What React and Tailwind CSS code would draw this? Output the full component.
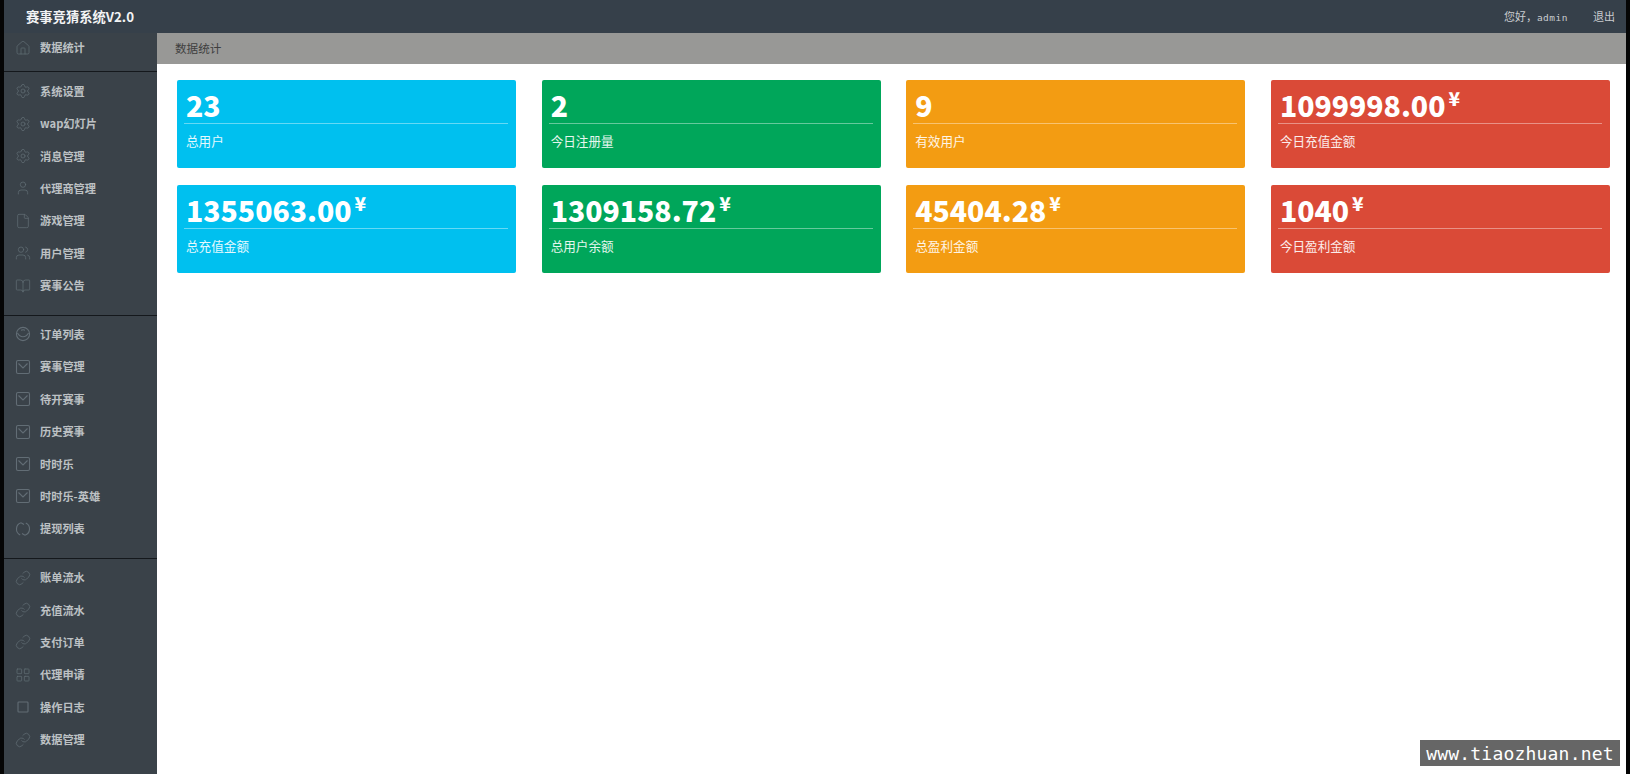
import React from "react";
import { Home, Settings, User, File, Users, BookOpen, Link, LayoutGrid } from "lucide-react";

const cjk = "font-['Noto_Sans_CJK_SC','Noto_Sans',sans-serif]";

function BoxIcon(props) {
  return (
    <svg width="16" height="16" viewBox="0 0 16 16" fill="none" stroke="currentColor" strokeWidth="1.1" className={props.className}>
      <rect x="1.5" y="1.5" width="13" height="13" rx="1.5" />
      <path d="M3.5 4.5L8 9l4.500-4.500" />
    </svg>
  );
}

function DonutIcon(props) {
  return (
    <svg width="16" height="16" viewBox="0 0 16 16" fill="none" stroke="currentColor" strokeWidth="1.1" className={props.className}>
      <circle cx="8" cy="8" r="6.6" />
      <path d="M2.500 7c1.500 3 3.500 3.800 5.500 3.800S12 10 13.500 7" />
      <path d="M6 4.200c1.500-.6 2.800-.6 4 0" />
    </svg>
  );
}

function RingIcon(props) {
  return (
    <svg width="16" height="16" viewBox="0 0 16 16" fill="none" stroke="currentColor" strokeWidth="1.1" className={props.className}>
      <path d="M6 1.800A6.600 6.600 0 0 0 5.200 14" />
      <path d="M10 14.200A6.600 6.600 0 0 0 10.800 2" />
      <path d="M6 1.800l3 1.600M10 14.200l-3-1.600" />
    </svg>
  );
}

function SquareIcon(props) {
  return (
    <svg width="16" height="16" viewBox="0 0 16 16" fill="none" stroke="currentColor" strokeWidth="1.1" className={props.className}>
      <rect x="3" y="3" width="10" height="10" rx="0.8" />
    </svg>
  );
}

const sections = [
  [["数据统计", Home]],
  [["系统设置", Settings], ["wap幻灯片", Settings], ["消息管理", Settings], ["代理商管理", User], ["游戏管理", File], ["用户管理", Users], ["赛事公告", BookOpen]],
  [["订单列表", DonutIcon], ["赛事管理", BoxIcon], ["待开赛事", BoxIcon], ["历史赛事", BoxIcon], ["时时乐", BoxIcon], ["时时乐-英雄", BoxIcon], ["提现列表", RingIcon]],
  [["账单流水", Link], ["充值流水", Link], ["支付订单", Link], ["代理申请", LayoutGrid], ["操作日志", SquareIcon], ["数据管理", Link]],
];

const cards = [
  ["23", false, "总用户", "bg-[#00c0ef]"],
  ["2", false, "今日注册量", "bg-[#00a65a]"],
  ["9", false, "有效用户", "bg-[#f39c12]"],
  ["1099998.00", true, "今日充值金额", "bg-[#da4a37]"],
  ["1355063.00", true, "总充值金额", "bg-[#00c0ef]"],
  ["1309158.72", true, "总用户余额", "bg-[#00a65a]"],
  ["45404.28", true, "总盈利金额", "bg-[#f39c12]"],
  ["1040", true, "今日盈利金额", "bg-[#da4a37]"],
];

function NavRow({ label, Icon, first }) {
  return (
    <div className={`flex items-center pl-[11px] ${first ? "h-[29px]" : "h-[32.4px]"}`}>
      <Icon size={16} strokeWidth={1.1} className="text-[#626d75] shrink-0" />
      <span className="ml-[9px] text-[11.2px] font-bold text-[#bdc1c4] whitespace-nowrap">{label}</span>
    </div>
  );
}

function Card({ value, yen, label, color }) {
  return (
    <div className={`h-[88px] rounded-[2px] pl-[7px] pr-2 text-white ${color}`}>
      <div className="h-[44px] border-b border-white/40 pl-[2px] flex items-start">
        <span className="mt-[7px] text-[28.4px] leading-[36px] font-black">{value}</span>
        {yen && <span className="ml-[3px] mt-[6px] text-[19px] leading-[24px] font-black">¥</span>}
      </div>
      <div className="mt-[8px] pl-[2px] text-[12.6px] leading-[18px] text-white/90">{label}</div>
    </div>
  );
}

export default function App() {
  return (
    <div className={`relative h-[774px] bg-[#050505] px-[4px] flex flex-col overflow-hidden ${cjk}`}>
      <header className="h-[33px] shrink-0 bg-[#36404a] flex items-center justify-between pl-[22px] pr-[11px]">
        <span className="text-[13.3px] font-bold text-[#f2f3f4]">赛事竞猜系统V2.0</span>
        <div className="flex items-center text-[11px] text-[#c9cccf]">
          <span>您好，<span className="font-['DejaVu_Sans_Mono',monospace] text-[9.5px] tracking-[0.5px]">admin</span></span>
          <span className="ml-[25px]">退出</span>
        </div>
      </header>
      <div className="flex flex-1 min-h-0">
        <aside className="w-[153px] shrink-0 bg-[#3a4249]">
          {sections.map((rows, i) => (
            <div
              key={i}
              className={
                i === 0
                  ? "pb-[9px] border-b border-[#14181c]"
                  : i === 1
                  ? "pt-[3px] pb-[13px] border-b border-[#14181c]"
                  : i === 2
                  ? "pt-[2.5px] pb-[13.5px] border-b border-[#14181c]"
                  : "pt-[2px]"
              }
            >
              {rows.map(([label, Icon]) => (
                <NavRow key={label} label={label} Icon={Icon} first={i === 0} />
              ))}
            </div>
          ))}
        </aside>
        <main className="flex-1 bg-white min-w-0">
          <div className="h-[31px] bg-[#989896] flex items-center pl-[18px] text-[11.6px] text-[#3f3f3f]">数据统计</div>
          <div className="grid grid-cols-4 gap-x-[25.5px] gap-y-[17px] pt-4 pl-5 pr-4">
            {cards.map(([value, yen, label, color]) => (
              <Card key={label} value={value} yen={yen} label={label} color={color} />
            ))}
          </div>
        </main>
      </div>
      <div className="absolute left-[1420px] top-[740px] w-[200px] h-[26px] bg-[#666666] flex items-center justify-center font-['DejaVu_Sans_Mono',monospace] text-[18px] tracking-[0.2px] text-white whitespace-nowrap">
        www.tiaozhuan.net
      </div>
    </div>
  );
}
